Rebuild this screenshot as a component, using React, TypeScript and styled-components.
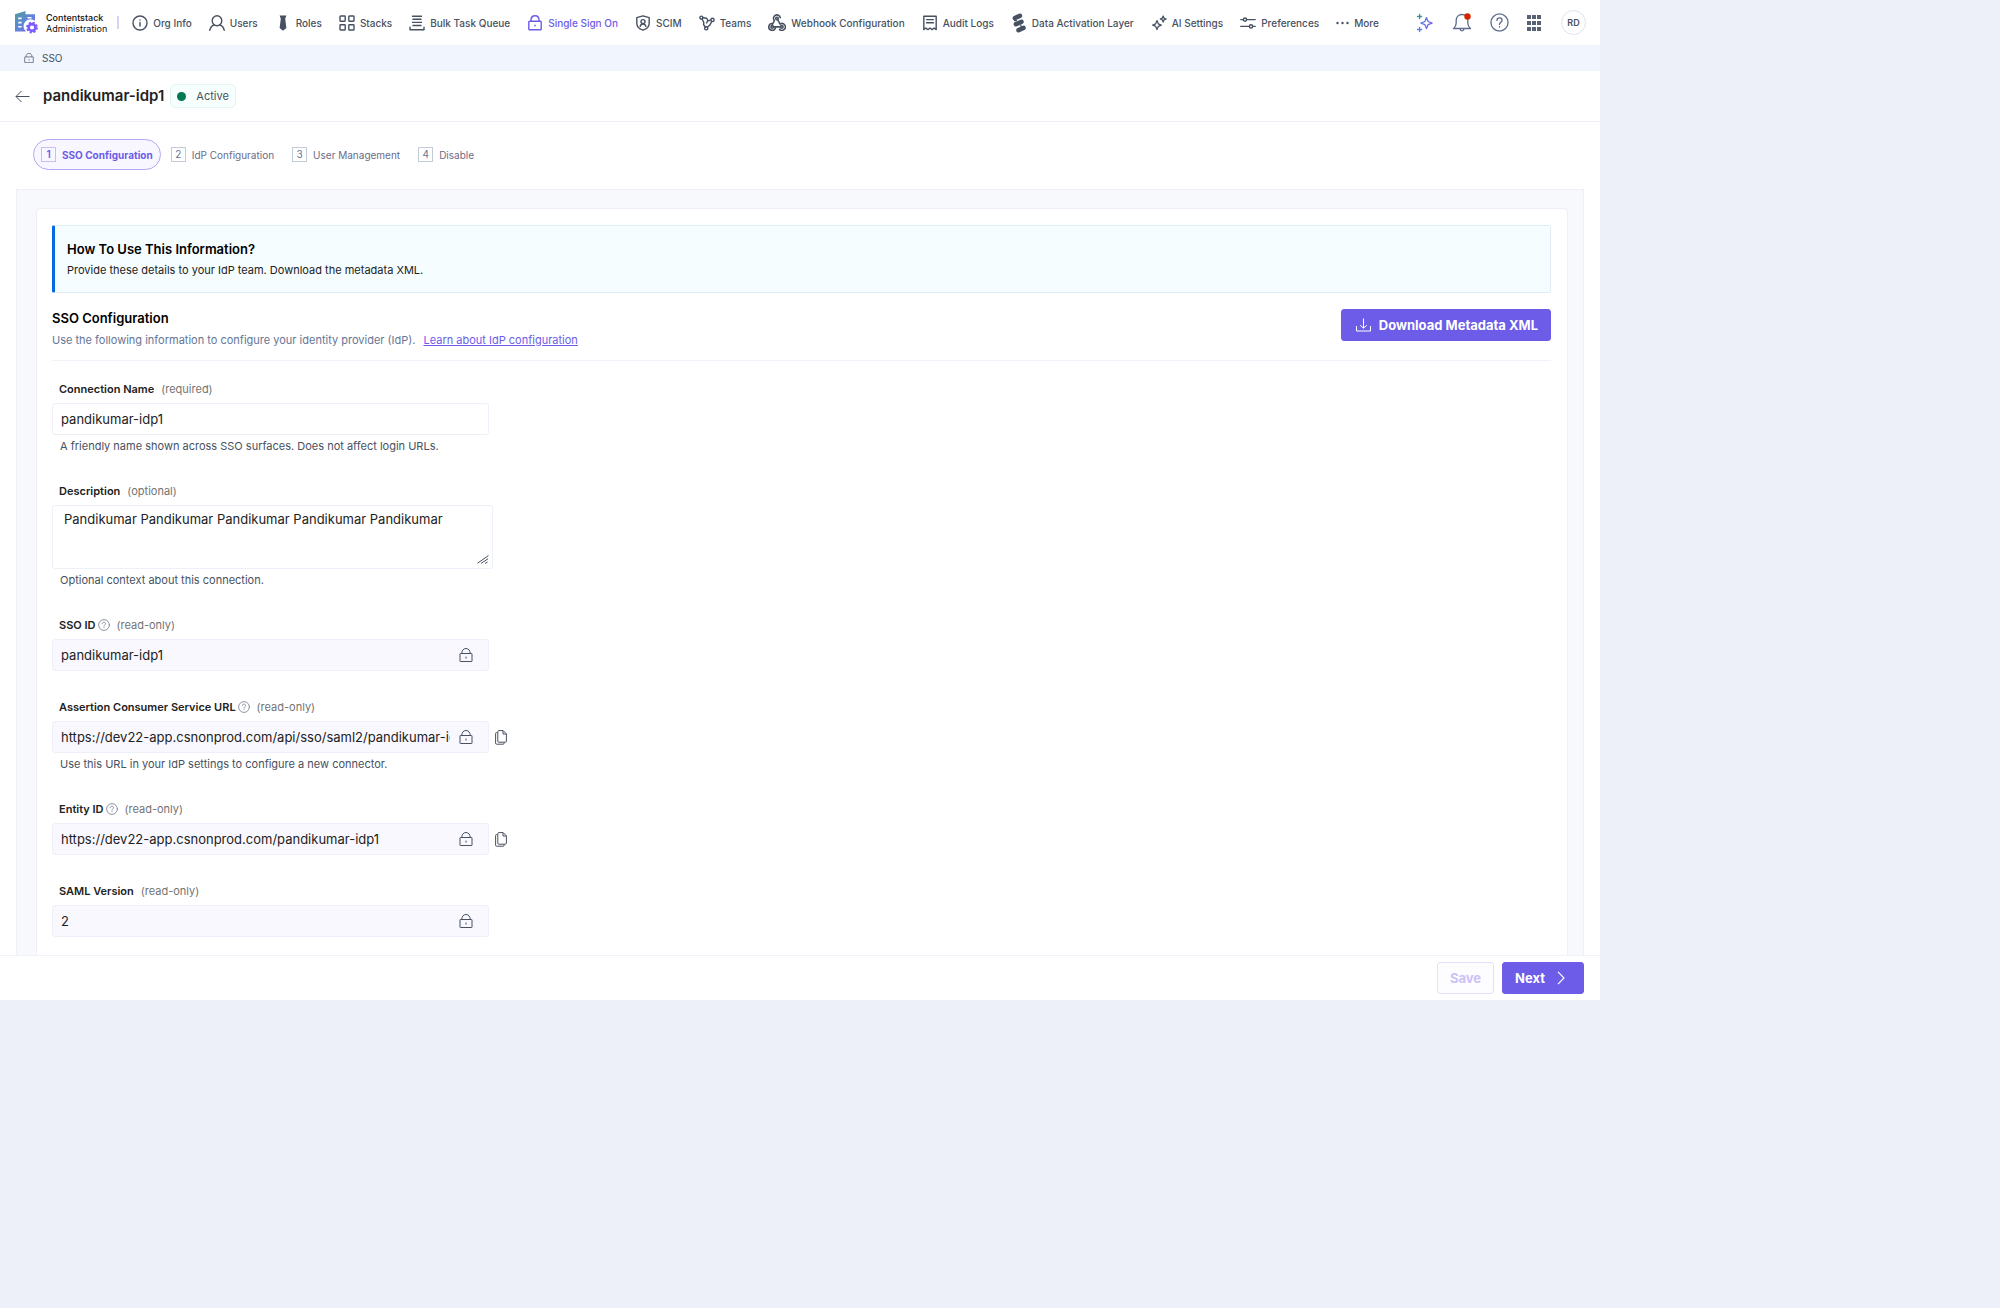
import React from 'react';
import styled, { createGlobalStyle, css } from 'styled-components';

const color = {
  ink: '#222222',
  slate: '#475161',
  muted: '#647696',
  purple: '#6c5ce7',
  line: '#f0f1f9',
};

const GlobalStyle = createGlobalStyle`
  *, *::before, *::after { box-sizing: border-box; }
  body {
    margin: 0;
    background: #edf0f9;
    color: ${color.ink};
    font-family: Inter, 'Noto Sans', sans-serif;
    font-size: 11px;
  }
  button, input, textarea { font-family: inherit; margin: 0; }
  h1, h2, p { margin: 0; }
  svg { display: block; flex: none; }
`;

const Shell = styled.div`
  width: 80%;
  height: calc(100vh - 308px);
  display: flex;
  flex-direction: column;
  background: #ffffff;
`;

/* ---------- top bar ---------- */

const TopBar = styled.header`
  height: 45px;
  flex: none;
  display: flex;
  align-items: center;
  padding: 0 14px 0 15px;
`;

const Brand = styled.a`
  display: flex;
  align-items: center;
  gap: 8px;
  padding-right: 10px;
  color: #111111;
  font-size: 9px;
  line-height: 11px;
  text-decoration: none;
  white-space: nowrap;
`;

const BrandName = styled.span`
  display: block;
  font-weight: 500;
`;

const BrandSub = styled.span`
  display: block;
`;

const BrandDivider = styled.span`
  width: 2px;
  height: 13px;
  margin-right: 13px;
  background: #d9d2f8;
`;

const Nav = styled.nav`
  display: flex;
  align-items: center;
  gap: 17px;
  flex: 1;
`;

const NavLink = styled.a<{ $active?: boolean }>`
  display: flex;
  align-items: center;
  gap: 5px;
  color: ${(p) => (p.$active ? color.purple : color.slate)};
  font-size: 10px;
  font-weight: 500;
  line-height: 16px;
  text-decoration: none;
  white-space: nowrap;
`;

const Tools = styled.div`
  display: flex;
  align-items: center;
  gap: 18px;
`;

const ToolButton = styled.button`
  display: flex;
  padding: 0;
  border: 0;
  background: none;
  color: #5d6b8c;
`;

const Avatar = styled.button`
  width: 25px;
  height: 25px;
  padding: 0;
  border: 1px solid #dde3f0;
  border-radius: 50%;
  background: #ffffff;
  color: ${color.slate};
  font-size: 9px;
  font-weight: 600;
`;

/* ---------- page heading ---------- */

const Crumbs = styled.nav`
  height: 26px;
  flex: none;
  display: flex;
  align-items: center;
  gap: 8px;
  padding-left: 24px;
  background: #f0f5fe;
  color: ${color.slate};
  font-size: 10px;
`;

const TitleBar = styled.div`
  height: 51px;
  flex: none;
  display: flex;
  align-items: center;
  padding-left: 15px;
  border-bottom: 1px solid ${color.line};
`;

const BackButton = styled.button`
  display: flex;
  margin-right: 13px;
  padding: 0;
  border: 0;
  background: none;
  color: ${color.slate};
`;

const Title = styled.h1`
  font-size: 15px;
  font-weight: 600;
  line-height: 24px;
`;

const Status = styled.span`
  display: flex;
  align-items: center;
  gap: 10px;
  height: 24px;
  margin-left: 6px;
  padding: 0 6px;
  border: 1px solid #e4f4f1;
  border-radius: 5px;
  background: #f6fffd;
  color: ${color.slate};
  font-size: 11px;
`;

const StatusDot = styled.span`
  width: 9px;
  height: 9px;
  border-radius: 50%;
  background: #007a52;
`;

/* ---------- steps ---------- */

const Steps = styled.ol`
  display: flex;
  flex: none;
  gap: 2px;
  margin: 0;
  padding: 17px 33px 19px;
  list-style: none;
`;

const StepButton = styled.button<{ $active?: boolean }>`
  display: flex;
  align-items: center;
  gap: 6px;
  height: 31px;
  padding: 0 7px;
  border: 1px solid transparent;
  border-radius: 16px;
  background: none;
  color: #6b6b88;
  font-size: 10px;
  font-weight: 400;
  ${(p) =>
    p.$active &&
    css`
      border-color: #b3a8f4;
      background: #f8f6ff;
      color: ${color.purple};
      font-weight: 700;
    `}
`;

const StepNumber = styled.span<{ $active?: boolean }>`
  width: 15px;
  height: 15px;
  border: 1px solid ${(p) => (p.$active ? '#c9bff6' : '#c3cad8')};
  color: ${(p) => (p.$active ? color.purple : color.muted)};
  font-size: 10px;
  font-weight: ${(p) => (p.$active ? 600 : 400)};
  line-height: 13px;
`;

/* ---------- content ---------- */

const Content = styled.main`
  flex: 1;
  min-height: 0;
  overflow: hidden;
  margin: 0 16px;
  padding: 18px 15px 18px 19px;
  border: 1px solid #eeeff7;
  border-bottom: 0;
  background: #f8f9fd;
`;

const Card = styled.section`
  padding: 16px 16px 60px 15px;
  border: 1px solid #eeeff7;
  border-radius: 4px;
  background: #ffffff;
`;

const Notice = styled.div`
  padding: 14px 12px 12px;
  border: 1px solid #e1edf4;
  border-left: 3px solid #0469e3;
  border-radius: 2px;
  background: #f5fdff;
`;

const Heading = styled.h2`
  padding-bottom: 2px;
  color: #000000;
  font-size: 13px;
  font-weight: 600;
  line-height: 18px;
`;

const NoticeText = styled.p`
  font-size: 11px;
  line-height: 20px;
`;

const SectionHead = styled.div`
  display: flex;
  justify-content: space-between;
  align-items: flex-start;
  margin: 16px 0 20px;
  padding-bottom: 9px;
  border-bottom: 1px solid ${color.line};
`;

const SectionText = styled.p`
  display: flex;
  gap: 8px;
  color: ${color.muted};
  font-size: 11px;
  line-height: 22px;
`;

const TextLink = styled.a`
  color: ${color.purple};
  text-decoration: underline;
`;

const Button = styled.button<{ $ghost?: boolean }>`
  display: flex;
  align-items: center;
  gap: 8px;
  height: 32px;
  padding: 0 12px 0 14px;
  border: 1px solid ${color.purple};
  border-radius: 3px;
  background: ${color.purple};
  color: #ffffff;
  font-size: 13px;
  font-weight: 700;
  white-space: nowrap;
  ${(p) =>
    p.$ghost &&
    css`
      padding: 0 12px;
      border-color: #e4dffb;
      background: #fdfcff;
      color: #cbc2f7;
    `}
`;

const NextButton = styled(Button)`
  gap: 12px;
  padding: 0 18px 0 12px;
`;

/* ---------- form ---------- */

const Form = styled.form`
  display: flex;
  flex-direction: column;
  gap: 28px;
`;

const LabelRow = styled.div`
  display: flex;
  align-items: center;
  gap: 2px;
  height: 16px;
  margin-bottom: 6px;
  padding-left: 7px;
  font-size: 11px;
`;

const Label = styled.label`
  font-weight: 600;
`;

const Hint = styled.span`
  padding-left: 5px;
  color: #737373;
`;

const InfoMark = styled.span`
  color: #7a8291;
`;

const ControlRow = styled.div`
  display: flex;
  align-items: center;
  gap: 6px;
`;

const frame = css`
  border: 1px solid #efeffa;
  border-radius: 3px;
  color: ${color.ink};
  font-size: 13px;
`;

const InputBox = styled.div<{ $locked?: boolean }>`
  ${frame}
  display: flex;
  align-items: center;
  gap: 9px;
  width: 437px;
  height: 32px;
  padding: 0 15px 0 8px;
  background: ${(p) => (p.$locked ? '#f9f8ff' : '#ffffff')};
  color: ${color.slate};
`;

const Input = styled.input`
  flex: 1;
  min-width: 0;
  padding: 0;
  border: 0;
  outline: 0;
  background: transparent;
  color: ${color.ink};
  font-size: 13px;
  line-height: 20px;
`;

const AreaBox = styled.div`
  position: relative;
  width: 441px;
  height: 64px;
`;

const TextArea = styled.textarea`
  ${frame}
  display: block;
  width: 100%;
  height: 100%;
  padding: 4px 11px;
  outline: 0;
  resize: none;
  line-height: 18px;
`;

const Grip = styled.svg`
  position: absolute;
  right: 4px;
  bottom: 5px;
`;

const Help = styled.p`
  margin-top: 3px;
  padding: 0 0 1px 8px;
  color: ${color.slate};
  font-size: 11px;
  line-height: 16px;
`;

const CopyButton = styled(ToolButton)`
  color: ${color.slate};
`;

const Footer = styled.footer`
  flex: none;
  display: flex;
  justify-content: flex-end;
  gap: 8px;
  height: 45px;
  padding: 6px 16px 0;
  border-top: 1px solid ${color.line};
`;

/* ---------- icons ---------- */

type IconProps = { children: React.ReactNode; w?: number };

const Icon = ({ children, w = 2 }: IconProps) => (
  <svg
    width="16"
    height="16"
    viewBox="0 0 16 16"
    fill="none"
    stroke="currentColor"
    strokeWidth={w * 0.7}
    strokeLinecap="round"
    strokeLinejoin="round"
    aria-hidden="true"
  >
    {children}
  </svg>
);

const OrgIcon = () => (
  <Icon>
    <circle cx="8" cy="8" r="7" />
    <path d="M8 7.4v3.6M8 4.9v.2" />
  </Icon>
);

const UserIcon = () => (
  <Icon>
    <ellipse cx="8" cy="5.8" rx="4.8" ry="5" />
    <path d="M.8 15.2c.7-2.8 2.2-4.6 4.3-5.2M15.2 15.2c-.7-2.8-2.2-4.6-4.3-5.2" />
  </Icon>
);

const TieIcon = () => (
  <Icon>
    <path d="M4.600 .4h6.800l-1.200 3.400 1.200 9.200-3.400 2.800-3.400-2.800 1.200-9.200z" fill="currentColor" stroke="none" />
  </Icon>
);

const StacksIcon = () => (
  <Icon>
    <rect x="1" y="1" width="5.200" height="5.200" rx=".6" />
    <rect x="9.800" y="1" width="5.200" height="5.200" rx=".6" />
    <rect x="1" y="9.800" width="5.200" height="5.200" rx=".6" />
    <rect x="9.800" y="9.800" width="5.200" height="5.200" rx=".6" />
  </Icon>
);

const QueueIcon = () => (
  <Icon>
    <path d="M3.500 1.200h9M4 4.300h8M3.500 7.400h9M4 10.500h8M1 12.200v2.600h14v-2.600" />
  </Icon>
);

const NavLockIcon = () => (
  <Icon>
    <rect x="1.800" y="6.300" width="12.400" height="8.500" rx=".8" />
    <path d="M4 6.100V5c0-2.500 1.700-4.200 4-4.200s4 1.700 4 4.200v1.100M8 10.100v.8" />
  </Icon>
);

const ShieldIcon = () => (
  <Icon>
    <path d="M8 .9l6.200 1.800v5.500c0 3.200-2.400 5.600-6.200 7-3.800-1.400-6.200-3.800-6.200-7V2.700z" />
    <circle cx="8" cy="6.600" r="2" />
    <path d="M5.200 11.300c.4-1.500 1.400-2.300 2.800-2.300s2.400.8 2.800 2.300" />
  </Icon>
);

const TeamsIcon = () => (
  <Icon w={2}>
    <circle cx="2.400" cy="2.600" r="1.500" />
    <circle cx="13.500" cy="4.900" r="1.600" />
    <circle cx="7.200" cy="13.300" r="1.600" />
    <path d="M3.900 2.700l3.800.6 1.200 2.400 3-.6M3.200 4.200l1.600 3.200-.2 2.300 1.800 2.300M12.800 6.500l-2 3.600-2.400 1.900M8.900 5.700L7.600 8" />
  </Icon>
);

const WebhookIcon = () => (
  <svg width="18" height="17" viewBox="0 0 24 24" fill="none" stroke="currentColor" strokeWidth="2.200" strokeLinecap="round" strokeLinejoin="round" aria-hidden="true">
    <circle cx="12" cy="6.300" r="1.800" />
    <circle cx="5.200" cy="18.200" r="1.800" />
    <circle cx="18.800" cy="18.200" r="1.800" />
    <path d="M8.300 9.300A4.800 4.800 0 1 1 16.600 5.200M8.300 9.300l-2.800 5.500M12.900 8l3.500 6.200a4.800 4.800 0 1 1-.8 7.500M7.200 18.200h8.800M5.200 13.500a4.800 4.800 0 1 0 4.600 6.200" />
  </svg>
);

const AuditIcon = () => (
  <Icon>
    <path d="M1.800 14.600V1.200h12.400v13.400l-2-1.600-2.100 1.600L8 13l-2.100 1.600L3.800 13zM4.600 4.600h6.800M4.600 7.800h6.800" />
  </Icon>
);

const DataIcon = () => (
  <svg width="16" height="20" viewBox="0 0 16 20" fill="currentColor" aria-hidden="true">
    <rect x="1.400" y="1.600" width="10" height="4.600" rx="2.300" transform="rotate(-24 6.400 3.900)" />
    <rect x="2.400" y="7.700" width="10.600" height="4.600" rx="2.300" transform="rotate(-24 7.700 10)" />
    <rect x="5" y="13.800" width="10" height="4.600" rx="2.300" transform="rotate(-24 10 16.100)" />
    <path d="M1.600 5l5 2.400-3 1.200zM8.600 11.600l4.800 2.400-3 1.200z" />
  </svg>
);

const SparkIcon = () => (
  <Icon w={1.8}>
    <path d="M6 5.600l1.300 3.200 3 1.300-3 1.300L6 14.600l-1.300-3.200-3-1.300 3-1.300zM12.200 1l.8 2.200 2.200.8-2.200.9-.8 2.200-.9-2.200-2.100-.9 2.100-.8z" />
  </Icon>
);

const SlidersIcon = () => (
  <Icon>
    <circle cx="5" cy="4.600" r="1.600" />
    <circle cx="11" cy="11.400" r="1.600" />
    <path d="M.8 4.600h2.600M6.600 4.600h8.600M.8 11.400h8.600M12.600 11.400h2.600" />
  </Icon>
);

const DotsIcon = () => (
  <svg width="13" height="16" viewBox="0 0 13 16" fill="currentColor" aria-hidden="true">
    <circle cx="1.500" cy="8" r="1.200" />
    <circle cx="6.500" cy="8" r="1.200" />
    <circle cx="11.500" cy="8" r="1.200" />
  </svg>
);

const Logo = () => (
  <svg width="23" height="23" viewBox="0 0 23 23" aria-hidden="true">
    <defs>
      <linearGradient id="logoFill" x1="0" y1="0" x2="1" y2="1">
        <stop offset="0" stopColor="#4f9d95" />
        <stop offset=".5" stopColor="#5f86d8" />
        <stop offset="1" stopColor="#7a5cff" />
      </linearGradient>
    </defs>
    <path d="M0 3.200L10.500 0v3.200H20v6.600a6.800 6.800 0 0 0-9 10.700H0z" fill="url(#logoFill)" />
    <path d="M3.200 7.400h3.400M3.200 11.600h3.400M3.200 15.800h3.400M12.500 6.800h4" stroke="#fff" strokeWidth="1.600" />
    <circle cx="17" cy="16.500" r="3.400" fill="none" stroke="#7a5cff" strokeWidth="2.600" />
    <circle cx="17" cy="16.500" r="5" fill="none" stroke="#7a5cff" strokeWidth="1.800" strokeDasharray="2.200 1.727" />
  </svg>
);

const AssistIcon = () => (
  <svg width="18" height="20" viewBox="0 0 18 20" fill="none" strokeLinejoin="round" strokeLinecap="round" aria-hidden="true">
    <defs>
      <linearGradient id="assistFill" x1="0" y1="0" x2="1" y2="1">
        <stop offset="0" stopColor="#4f8fd0" />
        <stop offset="1" stopColor="#7a4dff" />
      </linearGradient>
    </defs>
    <path d="M10.500 4.600l1.600 3.900 4 1.600-4 1.600-1.600 3.900-1.600-3.900-4-1.600 4-1.600z" stroke="url(#assistFill)" strokeWidth="1.300" />
    <path d="M3.600 1.500v4M1.600 3.500h4" stroke="#3f8f95" strokeWidth="1.300" />
    <path d="M3.600 14.500v4M1.600 16.500h4" stroke="#5a7be0" strokeWidth="1.300" />
  </svg>
);

const BellIcon = () => (
  <svg width="20" height="20" viewBox="0 0 20 20" fill="none" stroke="currentColor" strokeWidth="1.300" strokeLinejoin="round" aria-hidden="true">
    <path d="M1.500 15.500c1.800-1.500 2.700-3.200 2.700-5.500V7.200C4.200 3.900 6.600 1.500 10 1.500s5.800 2.400 5.800 5.700V10c0 2.300.9 4 2.700 5.500zM8 16c.2 1.300.9 1.900 2 1.900s1.800-.6 2-1.900" />
    <circle cx="15.500" cy="3.500" r="3.200" fill="#d62400" stroke="none" />
  </svg>
);

const HelpIcon = ({ size }: { size: number }) => (
  <svg width={size} height={size} viewBox="0 0 20 20" fill="none" stroke="currentColor" strokeWidth="1.400" strokeLinecap="round" aria-hidden="true">
    <circle cx="10" cy="10" r="9" />
    <path d="M7.300 7.800C7.400 6.200 8.500 5.200 10 5.200s2.700 1 2.700 2.400c0 2-2.700 2.200-2.700 4.400M10 14.400v.3" />
  </svg>
);

const GridIcon = () => (
  <svg width="16" height="16" viewBox="0 0 16 16" fill="#596273" aria-hidden="true">
    {[0, 6, 12].map((y) => [0, 5, 10].map((x) => <rect key={`${x}-${y}`} x={x} y={y} width="4" height="4" />))}
  </svg>
);

const LockIcon = ({ size }: { size: number }) => (
  <svg width={size} height={size} viewBox="0 0 14 14" fill="none" stroke="currentColor" strokeWidth="1" aria-hidden="true">
    <rect x="1" y="5.500" width="12" height="8" rx=".4" />
    <path d="M2.800 5.500C2.800 2.600 4.400.5 7 .5s4.200 2.100 4.200 5M7 8.600v2" />
  </svg>
);

const CopyIcon = () => (
  <svg width="12" height="15" viewBox="0 0 12 15" fill="none" stroke="currentColor" strokeWidth="1" strokeLinejoin="round" aria-hidden="true">
    <path d="M2.800 1.600C2.800 1 3.100.6 3.700.6h4.500l3.200 3.200v7.400c0 .6-.3 1-.9 1H3.700c-.6 0-.9-.4-.9-1zM8 .8v3.200h3.200M2.600 2.600H1.500c-.6 0-.9.3-.9.900v9.700c0 .6.3 1 .9 1h6.700c.6 0 .9-.4.9-1v-.8" />
  </svg>
);

const ArrowIcon = () => (
  <svg width="15" height="13" viewBox="0 0 15 13" fill="none" stroke="currentColor" strokeWidth="1" aria-hidden="true">
    <path d="M14.500 6.500H1M6.500 1L1 6.500 6.500 12" />
  </svg>
);

const DownloadIcon = () => (
  <svg width="15" height="14" viewBox="0 0 15 14" fill="none" stroke="currentColor" strokeWidth="1" aria-hidden="true">
    <path d="M7.500.5v9.500M4.200 7.200l3.300 3 3.300-3M.5 8v5h14V8" />
  </svg>
);

const ChevronIcon = () => (
  <svg width="8" height="14" viewBox="0 0 8 14" fill="none" stroke="currentColor" strokeWidth="1.200" aria-hidden="true">
    <path d="M1 .8L7 7l-6 6.200" />
  </svg>
);

/* ---------- data ---------- */

const navItems: { label: string; icon: React.ReactNode; active?: boolean }[] = [
  { label: 'Org Info', icon: <OrgIcon /> },
  { label: 'Users', icon: <UserIcon /> },
  { label: 'Roles', icon: <TieIcon /> },
  { label: 'Stacks', icon: <StacksIcon /> },
  { label: 'Bulk Task Queue', icon: <QueueIcon /> },
  { label: 'Single Sign On', icon: <NavLockIcon />, active: true },
  { label: 'SCIM', icon: <ShieldIcon /> },
  { label: 'Teams', icon: <TeamsIcon /> },
  { label: 'Webhook Configuration', icon: <WebhookIcon /> },
  { label: 'Audit Logs', icon: <AuditIcon /> },
  { label: 'Data Activation Layer', icon: <DataIcon /> },
  { label: 'AI Settings', icon: <SparkIcon /> },
  { label: 'Preferences', icon: <SlidersIcon /> },
  { label: 'More', icon: <DotsIcon /> },
];

const steps = ['SSO Configuration', 'IdP Configuration', 'User Management', 'Disable'];

type FieldProps = {
  id: string;
  label: string;
  hint: string;
  value: string;
  help?: string;
  info?: boolean;
  locked?: boolean;
  copy?: boolean;
  multiline?: boolean;
};

const fields: FieldProps[] = [
  {
    id: 'connection-name',
    label: 'Connection Name',
    hint: '(required)',
    value: 'pandikumar-idp1',
    help: 'A friendly name shown across SSO surfaces. Does not affect login URLs.',
  },
  {
    id: 'description',
    label: 'Description',
    hint: '(optional)',
    value: 'Pandikumar Pandikumar Pandikumar Pandikumar Pandikumar',
    help: 'Optional context about this connection.',
    multiline: true,
  },
  { id: 'sso-id', label: 'SSO ID', hint: '(read-only)', value: 'pandikumar-idp1', info: true, locked: true },
  {
    id: 'acs-url',
    label: 'Assertion Consumer Service URL',
    hint: '(read-only)',
    value: 'https://dev22-app.csnonprod.com/api/sso/saml2/pandikumar-idp1',
    help: 'Use this URL in your IdP settings to configure a new connector.',
    info: true,
    locked: true,
    copy: true,
  },
  {
    id: 'entity-id',
    label: 'Entity ID',
    hint: '(read-only)',
    value: 'https://dev22-app.csnonprod.com/pandikumar-idp1',
    info: true,
    locked: true,
    copy: true,
  },
  { id: 'saml-version', label: 'SAML Version', hint: '(read-only)', value: '2', locked: true },
];

const Field = ({ id, label, hint, value, help, info, locked, copy, multiline }: FieldProps) => (
  <div>
    <LabelRow>
      <Label htmlFor={id}>{label}</Label>
      {info && (
        <InfoMark>
          <HelpIcon size={12} />
        </InfoMark>
      )}
      <Hint>{hint}</Hint>
    </LabelRow>
    <ControlRow>
      {multiline ? (
        <AreaBox>
          <TextArea id={id} defaultValue={value} />
          <Grip width="12" height="9" viewBox="0 0 12 9" fill="none" stroke="#475161" strokeWidth="1" aria-hidden="true">
            <path d="M.5 8.200L11.500.6M4 8.400l7-4.600M8 8.500l2.500-1.500" />
          </Grip>
        </AreaBox>
      ) : (
        <InputBox $locked={locked}>
          <Input id={id} defaultValue={value} readOnly={locked} />
          {locked && <LockIcon size={14} />}
        </InputBox>
      )}
      {copy && (
        <CopyButton type="button" aria-label={`Copy ${label}`}>
          <CopyIcon />
        </CopyButton>
      )}
    </ControlRow>
    {help && <Help>{help}</Help>}
  </div>
);

export default function App() {
  return (
    <>
      <GlobalStyle />
      <Shell>
        <TopBar>
          <Brand href="#">
            <Logo />
            <span>
              <BrandName>Contentstack</BrandName>
              <BrandSub>Administration</BrandSub>
            </span>
          </Brand>
          <BrandDivider />
          <Nav>
            {navItems.map((item) => (
              <NavLink key={item.label} href="#" $active={item.active}>
                {item.icon}
                {item.label}
              </NavLink>
            ))}
          </Nav>
          <Tools>
            <ToolButton aria-label="Assistant"><AssistIcon /></ToolButton>
            <ToolButton aria-label="Notifications"><BellIcon /></ToolButton>
            <ToolButton aria-label="Help"><HelpIcon size={19} /></ToolButton>
            <ToolButton aria-label="Apps"><GridIcon /></ToolButton>
            <Avatar>RD</Avatar>
          </Tools>
        </TopBar>

        <Crumbs>
          <LockIcon size={10} />
          SSO
        </Crumbs>

        <TitleBar>
          <BackButton aria-label="Back"><ArrowIcon /></BackButton>
          <Title>pandikumar-idp1</Title>
          <Status>
            <StatusDot />
            Active
          </Status>
        </TitleBar>

        <Steps>
          {steps.map((step, index) => (
            <li key={step}>
              <StepButton $active={index === 0}>
                <StepNumber $active={index === 0}>{index + 1}</StepNumber>
                {step}
              </StepButton>
            </li>
          ))}
        </Steps>

        <Content>
          <Card>
            <Notice>
              <Heading>How To Use This Information?</Heading>
              <NoticeText>Provide these details to your IdP team. Download the metadata XML.</NoticeText>
            </Notice>
            <SectionHead>
              <div>
                <Heading>SSO Configuration</Heading>
                <SectionText>
                  Use the following information to configure your identity provider (IdP).
                  <TextLink href="#">Learn about IdP configuration</TextLink>
                </SectionText>
              </div>
              <Button>
                <DownloadIcon />
                Download Metadata XML
              </Button>
            </SectionHead>
            <Form>
              {fields.map((field) => (
                <Field key={field.id} {...field} />
              ))}
            </Form>
          </Card>
        </Content>

        <Footer>
          <Button $ghost disabled>Save</Button>
          <NextButton>
            Next
            <ChevronIcon />
          </NextButton>
        </Footer>
      </Shell>
    </>
  );
}
